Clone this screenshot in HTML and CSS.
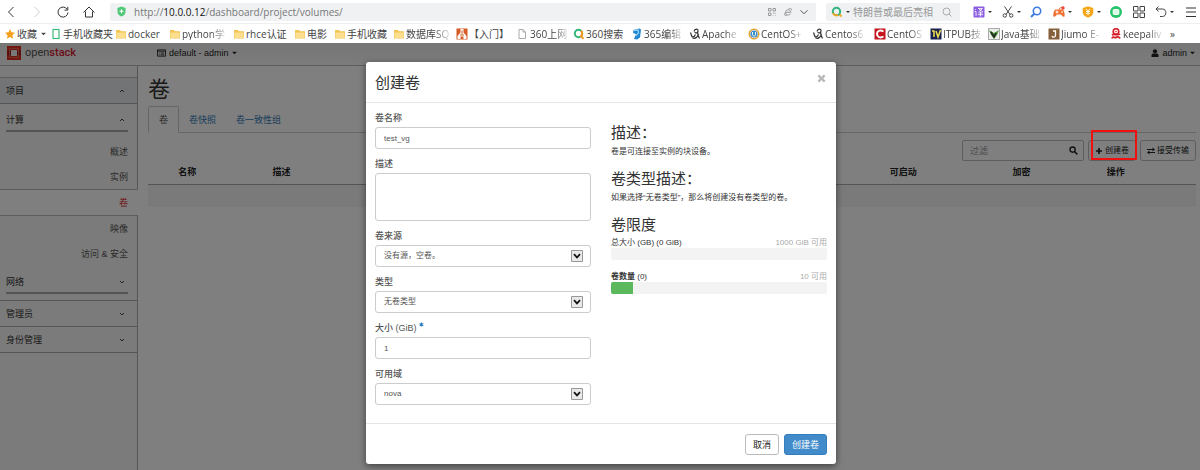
FILE: index.html
```
<!DOCTYPE html>
<html lang="zh-CN">
<head>
<meta charset="utf-8">
<title>卷 - OpenStack Dashboard</title>
<link rel="stylesheet" href="styles.css">
</head>
<body>
<svg class="defs" aria-hidden="true">
  <symbol id="folder" viewBox="0 0 12 12"><path d="M1 2h4l1 1.300h5v7.200H1z" fill="#f4c454"/><path d="M1.500 4.500h9v5.500h-9z" fill="#fcdf8e"/></symbol>
  <symbol id="up" viewBox="0 0 8 8"><path d="M2 5l2-2 2 2" fill="none" stroke="#444" stroke-width="1"/></symbol>
  <symbol id="down" viewBox="0 0 8 8"><path d="M2 3l2 2 2-2" fill="none" stroke="#444" stroke-width="1"/></symbol>
  <symbol id="caret" viewBox="0 0 6 4"><path d="M0 .5h6L3 3.500z" fill="currentColor"/></symbol>
  <symbol id="feather" viewBox="0 0 12 12"><path d="M1.500 4.500l1 3c.5 2 2.500 2 4-1M5 3.500c1-3 4-3 4-1 0 3-3 3-3 1.500M9 3c-1 3 0 5 1.500 7.500M3.500 10c3 1 5-1 6-4" fill="none" stroke="#333" stroke-width="1.200"/></symbol>
  <symbol id="select-arrow" viewBox="0 0 12 12"><path d="M.5.5h11v11H.5z" fill="#e9e9e9" stroke="#999"/><path d="M3 4.200l3 3.200 3-3.200" fill="none" stroke="#111" stroke-width="1.700"/></symbol>
</svg>

<header class="browser">
  <div class="toolbar">
    <nav class="nav-buttons">
      <button aria-label="后退"><svg viewBox="0 0 12 12"><path d="M8.500 1L3.500 6l5 5" fill="none" stroke="#333"/></svg></button>
      <button aria-label="前进"><svg viewBox="0 0 12 12"><path d="M3.500 1l5 5-5 5" fill="none" stroke="#ccc"/></svg></button>
      <button aria-label="刷新"><svg viewBox="0 0 12 12"><path d="M10.300 3.500A5 5 0 1 0 11 6.500" fill="none" stroke="#333"/><path d="M10.800.8v3.300H7.500" fill="none" stroke="#333"/></svg></button>
      <button aria-label="主页"><svg viewBox="0 0 12 12"><path d="M.5 6.500L6 1l5.500 5.500M2.500 5.500V11h7V5.500" fill="none" stroke="#333"/></svg></button>
    </nav>
    <div class="address">
      <svg class="shield" viewBox="0 0 10 12"><path d="M5 .5l4.500 1.500v4C9.500 9 7.500 10.500 5 11.500 2.500 10.500.5 9 .5 6V2z" fill="#4fc978"/><path d="M5 3.500v4.500M2.800 5.700h4.400" stroke="#fff" stroke-width="1.300"/></svg>
      <span class="url">http://<b>10.0.0.12</b>/dashboard/project/volumes/</span>
      <svg class="small" viewBox="0 0 8 8"><path d="M.5.500h2.500v2.500H.5zM5 .5h2.500v2.500H5zM.5 5h2.500v2.500H.5zM5 5h1M7 5v1M5 7.500V7M7 7.500h.5" fill="none" stroke="#999"/></svg>
      <svg class="small" viewBox="0 0 8 8"><path d="M2 4.300h4.800C6.800 1 1.500 1 1.500 4.300c0 3 3.500 3.500 5 1.500M4.500 1.200C6 0 8 0 7.300 2.200M1.300 4.500C0 7 .8 8 3 7" fill="none" stroke="#999"/></svg>
      <svg class="small dark" viewBox="0 0 8 8"><path d="M.5 2.300L4 5.800l3.500-3.500" fill="none" stroke="#555"/></svg>
    </div>
    <div class="search">
      <svg class="icon" viewBox="0 0 12 12"><circle cx="5.500" cy="5.500" r="3.700" fill="none" stroke="#30b47a" stroke-width="2"/><path d="M2 7a3.700 3.700 0 0 0 5 2" fill="none" stroke="#f5a623" stroke-width="2"/><path d="M8.500 8.500l2 2" stroke="#f5a623" stroke-width="2"/></svg>
      <svg class="caret" viewBox="0 0 6 4"><use href="#caret"/></svg>
      <input type="text" aria-label="搜索" placeholder="特朗普或最后亮相">
      <svg class="mag" viewBox="0 0 10 10"><circle cx="4.500" cy="4.500" r="3.500" fill="none" stroke="#aaa"/><path d="M7 7l2.500 2.500" stroke="#aaa"/></svg>
    </div>
    <div class="tools">
      <button aria-label="翻译"><svg class="tool" viewBox="0 0 12 12"><rect x=".5" y=".5" width="11" height="11" rx="1" fill="#8a5fe0"/><path d="M2 3l1 1M1.500 5.500H3v4l1-1M5 2.500h4.500L5.500 6M6 3l4 3M7.500 5.500v5M5.500 7h4M5 8.700h5" stroke="#fff" stroke-width=".8" fill="none"/></svg></button>
      <button aria-label="截图"><svg class="tool" viewBox="0 0 12 12"><path d="M2.500.5l5.500 8M9.500.5L4 8.500" fill="none" stroke="#444"/><circle cx="2.800" cy="9.500" r="1.700" fill="none" stroke="#444"/><circle cx="9.200" cy="9.500" r="1.700" fill="none" stroke="#444"/></svg></button>
      <button aria-label="查找"><svg class="tool" viewBox="0 0 12 12"><circle cx="7" cy="5" r="3.700" fill="none" stroke="#3e7be0" stroke-width="1.600"/><path d="M4.500 7.500L1 11" stroke="#3e7be0" stroke-width="2"/></svg></button>
      <button aria-label="游戏"><svg class="tool" viewBox="0 0 12 12"><path d="M2.500 3.500h7c2 1 2.500 5 2 7-1.500 1-2.500-1-3.500-2H4c-1 1-2 3-3.500 2-.5-2 0-6 2-7z" fill="#f07030"/><path d="M6 3.500C6 1 9 2.500 9.500.500" stroke="#f07030" fill="none"/><path d="M2.500 6h3M4 4.500v3M8 6h2" stroke="#fff"/><circle cx="10" cy="2" r="1.700" fill="#e8483c"/></svg></button>
      <button aria-label="钱包"><svg class="tool" viewBox="0 0 12 12"><path d="M6 .3l5.300 1.700v4.500C11 9 9 10.700 6 11.800 3 10.700 1 9 .7 6.500V2z" fill="#f5a81c"/><path d="M4 3l2 2 2-2M6 5v4M4 5.500h4M4 7.300h4" stroke="#fff" stroke-width=".9" fill="none"/></svg></button>
      <button aria-label="手机"><svg class="tool" viewBox="0 0 12 12"><circle cx="6" cy="6" r="6" fill="#27c46b"/><rect x="3.200" y="3.500" width="5.600" height="5" rx="1" fill="#d9f7e6" stroke="#fff"/></svg></button>
      <button aria-label="应用"><svg class="tool" viewBox="0 0 12 12"><path d="M.5.500h4.500v4.500H.5zM7 .5h4.500v4.500H7zM.5 7h4.500v4.500H.5zM7 7h4.500v4.500H7z" fill="none" stroke="#444"/></svg></button>
      <button aria-label="恢复"><svg class="tool" viewBox="0 0 12 12"><path d="M3.500.5L1 3l2.500 2.500M1 3h6.500c4.500 0 4.500 7.500 0 7.500H5" fill="none" stroke="#444"/></svg></button>
      <button aria-label="菜单"><svg class="tool" viewBox="0 0 12 12"><path d="M1 2h10M1 6h10M1 10.500h10" stroke="#333"/></svg></button>
    </div>
  </div>
  <nav class="bookmarks">
    <a href="#"><svg viewBox="0 0 12 12"><path d="M6 1l1.500 3.300 3.500.4-2.600 2.500.7 3.600L6 9l-3.100 1.800.7-3.600L1 4.700l3.500-.4z" fill="#f5a01c"/></svg><span>收藏</span><svg class="caret" viewBox="0 0 6 4"><use href="#caret"/></svg></a>
    <a href="#"><svg viewBox="0 0 12 12"><rect x="3" y="1.500" width="6" height="9" fill="none" stroke="#3dba78" stroke-width="1.200"/></svg><span>手机收藏夹</span></a>
    <a href="#"><svg><use href="#folder"/></svg><span>docker</span></a>
    <a href="#" class="fade"><svg><use href="#folder"/></svg><span>python学</span></a>
    <a href="#"><svg><use href="#folder"/></svg><span>rhce认证</span></a>
    <a href="#"><svg><use href="#folder"/></svg><span>电影</span></a>
    <a href="#"><svg><use href="#folder"/></svg><span>手机收藏</span></a>
    <a href="#" class="fade"><svg><use href="#folder"/></svg><span>数据库SQ</span></a>
    <a href="#"><svg viewBox="0 0 12 12"><rect x=".5" y=".5" width="11" height="11" fill="#d65a24"/><path d="M4.500 1h3v3.500L10.500 8v3h-3V8.500h-3V11h-3V8l3-3.500z" fill="#fff"/><path d="M6 2.500v3.500M4 7h4" stroke="#d65a24"/></svg><span>【入门】</span></a>
    <a href="#" class="fade"><svg viewBox="0 0 12 12"><path d="M2 1.500h4l2.500 2.500v6.500H2zM6 1.500V4h2.500" fill="none" stroke="#aaa"/></svg><span>360上网</span></a>
    <a href="#"><svg viewBox="0 0 12 12"><circle cx="5.500" cy="5.500" r="3.700" fill="none" stroke="#30b47a" stroke-width="2"/><path d="M8 2.700a3.700 3.700 0 0 1 0 5.500l2.500 2.500" fill="none" stroke="#f59a23" stroke-width="2"/></svg><span>360搜索</span></a>
    <a href="#" class="fade"><svg viewBox="0 0 12 12"><path d="M2.500 2l6-1.500 1.500 1-1 8-3 2-3-.5 2-5-3-1z" fill="#1f86cf"/><path d="M3 2.500l4-.5.5 2.500L5 8" fill="none" stroke="#9fd8f8" stroke-width="1.200"/></svg><span>365编辑</span></a>
    <a href="#" class="fade"><svg><use href="#feather"/></svg><span>Apache</span></a>
    <a href="#" class="fade"><svg viewBox="0 0 12 12"><circle cx="6" cy="6" r="4.700" fill="#fff" stroke="#e0a53b" stroke-width="1.600"/><circle cx="6" cy="6" r="3.600" fill="#3a8fc6"/><path d="M4.500 4v2.500c0 2 3 2 3 0V4" fill="none" stroke="#fff"/></svg><span>CentOS+</span></a>
    <a href="#" class="fade"><svg><use href="#feather"/></svg><span>Centos6</span></a>
    <a href="#" class="fade"><svg viewBox="0 0 12 12"><rect x=".5" y=".5" width="11" height="11" fill="#c4161c"/><path d="M9.500 3.500C6 1.500 3 3 3 6s3 4.500 6.500 2.500" fill="none" stroke="#fff" stroke-width="2"/></svg><span>CentOS</span></a>
    <a href="#" class="fade"><svg viewBox="0 0 12 12"><rect x=".5" y=".5" width="11" height="11" fill="#182050"/><path d="M2 3h2v6M6 3l2 6 2.500-7" fill="none" stroke="#f2e14a" stroke-width="1.500"/></svg><span>ITPUB技</span></a>
    <a href="#" class="fade"><svg viewBox="0 0 12 12"><rect x=".5" y=".5" width="11" height="11" fill="#eee" stroke="#aaa"/><path d="M1 2l5 3 5-3-2 5-3 4-3-4z" fill="#4a9636"/><path d="M3 4l3 5 2-4" fill="none" stroke="#222" stroke-width="1.500"/></svg><span>Java基础</span></a>
    <a href="#" class="fade"><svg viewBox="0 0 12 12"><rect x=".5" y=".5" width="11" height="11" fill="#86603a"/><path d="M5 3h2.500v4.500c0 2-3 2-3.500.5" fill="none" stroke="#fff" stroke-width="1.300"/></svg><span>Jiumo E-</span></a>
    <a href="#" class="fade"><svg viewBox="0 0 12 12"><circle cx="6" cy="3.500" r="2.800" fill="none" stroke="#d5202a" stroke-width="1.700"/><path d="M2 7c3-2 5 1 8-1M2 10.500c1-3 3 0 4-1s3-1 4 1" fill="none" stroke="#d5202a" stroke-width="1.800"/><circle cx="6" cy="3.500" r=".8" fill="#d5202a"/></svg><span>keepaliv</span></a>
    <button class="more" aria-label="更多书签">»</button>
  </nav>
</header>

<div class="viewport">
  <div class="page">
    <header class="topbar">
      <a href="#" class="brand"><svg viewBox="0 0 16 16"><path d="M1 1h14v14H1zM5 5v6h6V5z" fill="#e0301e" fill-rule="evenodd"/><path d="M1 5.500h4v5H1zM11 5.500h4v5h-4z" fill="#a8201a"/><path d="M3.500 3.500h9v9h-9z" fill="none" stroke="#f08a80" stroke-width=".6"/></svg><span>open<b>stack</b></span></a>
      <button class="context"><svg viewBox="0 0 10 8"><path d="M.5.500h9v7h-9zM.5 2h9M2 4h1M4 4h4M2 6h1M4 6h4" fill="none" stroke="#222"/></svg>default - admin<svg class="caret" viewBox="0 0 6 4"><use href="#caret"/></svg></button>
      <button class="user"><svg viewBox="0 0 8 8"><circle cx="4" cy="2.300" r="2.100" fill="#222"/><path d="M.5 8V6c0-1 1-1.600 2-1.600h3c1 0 2 .6 2 1.600v2z" fill="#222"/></svg>admin<svg class="caret" viewBox="0 0 6 4"><use href="#caret"/></svg></button>
    </header>
    <div class="columns">
      <nav class="sidebar">
        <button class="panel open">项目<svg><use href="#up"/></svg></button>
        <button class="group">计算<svg><use href="#up"/></svg></button>
        <a href="#">概述</a>
        <a href="#">实例</a>
        <a href="#" class="active">卷</a>
        <a href="#">映像</a>
        <a href="#">访问 &amp; 安全</a>
        <button class="group last">网络<svg><use href="#down"/></svg></button>
        <button class="panel">管理员<svg><use href="#down"/></svg></button>
        <button class="panel">身份管理<svg><use href="#down"/></svg></button>
      </nav>
      <main class="content">
        <h1>卷</h1>
        <nav class="tabs"><a href="#" class="current">卷</a><a href="#">卷快照</a><a href="#">卷一致性组</a></nav>
        <div class="actions">
          <div class="filter"><input type="text" aria-label="过滤" placeholder="过滤"><svg viewBox="0 0 10 10"><circle cx="4" cy="4" r="2.900" fill="none" stroke="#222" stroke-width="1.500"/><path d="M6.300 6.300l3 3" stroke="#222" stroke-width="1.700"/></svg></div>
          <div class="marked"><button class="btn"><svg viewBox="0 0 8 8"><path d="M4 1v6M1 4h6" stroke="#222" stroke-width="1.700"/></svg>创建卷</button></div>
          <button class="btn"><svg viewBox="0 0 8 8"><path d="M0 2.500h6M2 5.500h6" stroke="#222" stroke-width="1.200"/><path d="M5.500.5L8 2.500 5.500 4.500zM2.500 3.500L0 5.500l2.500 2z" fill="#222"/></svg>接受传输</button>
        </div>
        <table>
          <colgroup><col class="c-check"><col class="c-name"><col class="c-name"><col><col><col><col><col><col class="c-boot"><col class="c-name"><col class="c-name"></colgroup>
          <thead><tr><th></th><th>名称</th><th>描述</th><th>大小</th><th colspan="4"></th><th>可启动</th><th>加密</th><th>操作</th></tr></thead>
          <tbody><tr><td colspan="11"></td></tr></tbody>
        </table>
      </main>
    </div>
  </div>

  <div class="backdrop">
    <form class="modal" role="dialog" aria-labelledby="dialog-title">
      <header><h2 id="dialog-title">创建卷</h2><button type="button" class="close" aria-label="关闭"><svg viewBox="0 0 10 10"><path d="M1.500 1.500l7 7M8.500 1.500l-7 7" stroke="#b8b8b8" stroke-width="2.500"/></svg></button></header>
      <div class="modal-body">
        <div class="fields">
          <div class="field"><label for="name">卷名称</label><input id="name" type="text" value="test_vg"></div>
          <div class="field"><label for="desc">描述</label><textarea id="desc"></textarea></div>
          <div class="field"><label for="source">卷来源</label><div class="select"><select id="source"><option>没有源，空卷。</option></select><svg><use href="#select-arrow"/></svg></div></div>
          <div class="field"><label for="type">类型</label><div class="select"><select id="type"><option>无卷类型</option></select><svg><use href="#select-arrow"/></svg></div></div>
          <div class="field"><label for="size">大小 (GiB) <svg class="required" viewBox="0 0 6 6"><path d="M3 .5v5M.8 1.700l4.400 2.600M5.200 1.700L.8 4.300" stroke="#2f7cc4" stroke-width="1.300"/></svg></label><input id="size" type="text" value="1"></div>
          <div class="field"><label for="zone">可用域</label><div class="select"><select id="zone"><option>nova</option></select><svg><use href="#select-arrow"/></svg></div></div>
        </div>
        <div class="help">
          <h3>描述：</h3>
          <p>卷是可连接至实例的块设备。</p>
          <h3>卷类型描述：</h3>
          <p>如果选择“无卷类型”，那么将创建没有卷类型的卷。</p>
          <h3>卷限度</h3>
          <div class="quota"><span>总大小 (GB) (0 GiB)</span><span class="left">1000 GiB 可用</span></div>
          <div class="bar"></div>
          <div class="quota"><span><b>卷数量</b> (0)</span><span class="left">10 可用</span></div>
          <div class="bar"><div class="fill" style="width:10%"></div></div>
        </div>
      </div>
      <footer><button type="button" class="btn">取消</button><button type="button" class="btn primary">创建卷</button></footer>
    </form>
  </div>
</div>
</body>
</html>
```
FILE: styles.css
```
* { box-sizing: border-box; }
html, body { height: 100%; margin: 0; }
body {
  display: flex;
  flex-direction: column;
  overflow: hidden;
  font: 9px/12px "Liberation Sans", "Noto Sans CJK SC", sans-serif;
  color: #333;
}
button, input, select, textarea { font: inherit; color: inherit; }
button { display: flex; align-items: center; padding: 0; border: 0; background: none; white-space: nowrap; }
a { color: inherit; text-decoration: none; }
svg { flex: none; display: block; }
.defs { position: absolute; width: 0; height: 0; }
.caret { width: 5px; height: 4px; }

/* Browser chrome */
.browser { flex: none; background: #fff; font-family: "Open Sans", "Noto Sans CJK SC", sans-serif; font-size: 10px; }
.toolbar { display: flex; align-items: center; height: 24px; border-bottom: 1px solid #eee; }
.nav-buttons { display: flex; gap: 14px; padding: 0 15px 0 5px; }
.nav-buttons svg { width: 12px; height: 12px; }
.address { flex: 1; display: flex; align-items: center; gap: 8px; height: 18px; padding: 0 8px 0 7px; background: #eff1f3; border-radius: 2px; }
.shield { width: 9px; height: 11px; }
.url { flex: 1; color: #777; }
.url b { font-weight: 400; color: #111; }
.small { width: 8px; height: 8px; }
.search { display: flex; align-items: center; gap: 3px; width: 134px; height: 18px; margin: 0 10px; padding: 0 8px 0 5px; background: #eff1f3; border-radius: 2px; }
.search .icon { width: 12px; height: 12px; }
.search .caret { width: 4px; }
.search input { flex: 1; min-width: 0; padding: 0; border: 0; background: none; }
.search input::placeholder { color: #999; }
.mag { width: 10px; height: 10px; }
.tools { display: grid; grid-template-columns: 29px 28px 23px 29px 28px 23px 22px 30px 14px; width: 230px; padding-left: 3px; }
.tools .tool { width: 12px; height: 12px; }
.tools button:nth-child(1)::after,
.tools button:nth-child(2)::after,
.tools button:nth-child(4)::after,
.tools button:nth-child(5)::after,
.tools button:nth-child(8)::after { content: ""; margin-left: 3px; border: 2px solid transparent; border-top-color: #333; border-bottom: 0; }
.bookmarks {
  display: grid;
  grid-template-columns: 46px 65px 54px 64px 61px 40px 59px 63px 61px 56px 58px 58px 59px 64px 62px 56px 58px 60px 62px 60px auto;
  align-items: center;
  height: 19px;
  padding-left: 4px;
  color: #444;
}
.bookmarks a { display: flex; align-items: center; gap: 1px; white-space: nowrap; }
.bookmarks svg { width: 12px; height: 12px; }
.bookmarks .caret { width: 5px; height: 4px; margin-left: 3px; }
.fade span { -webkit-mask-image: linear-gradient(90deg, #000 65%, rgba(0, 0, 0, .2)); mask-image: linear-gradient(90deg, #000 65%, rgba(0, 0, 0, .2)); }

/* Dashboard */
.viewport { flex: 1; position: relative; overflow: hidden; }
.page { display: flex; flex-direction: column; height: 100%; background: #fff; }
.page::after { content: ""; position: absolute; inset: 0; background: rgba(0, 0, 0, .5); }
.topbar { display: flex; align-items: center; height: 23px; padding: 0 5px 2px 6px; background: linear-gradient(#ececec, #f8f8f8); border-bottom: 1px solid #bbb; color: #222; }
.brand { display: flex; align-items: center; gap: 3px; width: 151px; font: 11px/16px Roboto, sans-serif; color: #555; }
.brand svg { width: 16px; height: 16px; }
.brand b { font-weight: 500; color: #da1a32; }
.context, .user { gap: 3px; }
.context svg { width: 9px; height: 8px; }
.user { margin-left: auto; }
.user svg { width: 8px; height: 8px; }
.topbar .caret { width: 5px; height: 4px; }
.columns { flex: 1; display: flex; }
.sidebar { width: 138px; flex: none; padding-top: 11px; background: #f7f7f7; border-right: 1px solid #aaa; }
.sidebar svg { width: 8px; height: 8px; margin-left: auto; }
.sidebar a { display: flex; align-items: center; justify-content: flex-end; height: 25px; padding-right: 9px; color: #555; }
.sidebar .active { height: 27px; margin-right: -1px; padding-right: 10px; background: #fff; border: solid #bbb; border-width: 1px 0; color: #d22; }
.panel { width: 100%; height: 26px; padding: 0 11px 0 6px; border-bottom: 1px solid #aaa; }
.open { height: 27px; background: #e6e9ec; border-top: 1px solid #bbb; }
.group { width: 122px; height: 24px; margin: 4px 0 7px 6px; padding: 2px 2px 0 0; border-bottom: 2px solid #aaa; }
.last { margin-bottom: 6px; }
.group.last + .panel { height: 27px; border-top: 1px solid #aaa; }
.content { flex: 1; min-width: 0; padding: 12px 4px 0 10px; }
h1 { margin: 0; font-size: 22px; line-height: 24px; font-weight: 400; }
.tabs { display: flex; height: 31px; padding-top: 4px; border-bottom: 1px solid #ccc; color: #337ab7; }
.tabs a { padding: 8px 10px; }
.tabs .current { height: 27px; padding: 7px 10px; border: 1px solid #ccc; border-bottom-color: #fff; border-radius: 2px 2px 0 0; background: #fff; color: #555; }
.actions { display: flex; justify-content: flex-end; gap: 4px; padding-top: 7px; }
.actions .btn { padding: 0 6px; font-size: 8px; }
.filter { display: flex; align-items: center; width: 122px; height: 21px; padding: 0 5px 0 7px; border: 1px solid #bbb; border-radius: 2px; }
.filter input { flex: 1; min-width: 0; padding: 0; border: 0; background: none; }
.filter input::placeholder { color: #999; }
.filter svg { width: 9px; height: 9px; }
.btn { justify-content: center; gap: 2px; height: 21px; padding: 0 7px; border: 1px solid #bbb; border-radius: 3px; background: #fff; color: #222; }
.btn svg { width: 8px; height: 8px; }
.marked { position: relative; }
.marked::after { content: ""; position: absolute; z-index: 2; inset: -10px -1px 1px 3px; border: 2px solid #f01010; }
table { width: 100%; table-layout: fixed; border-collapse: collapse; }
th { height: 23px; padding: 0 5px; border-bottom: 1px solid #aaa; text-align: left; font-weight: 700; color: #222; }
td { height: 23px; padding: 0; background: #f4f4f4; }
.c-check { width: 2.4%; }
.c-name { width: 9%; }
.c-boot { width: 11.7%; }

/* Dialog */
.backdrop { position: absolute; z-index: 1; inset: 0; display: flex; align-items: flex-start; justify-content: center; padding: 19px 0 0 2px; }
.modal { width: 470px; background: #fff; border-radius: 3px; box-shadow: 0 2px 7px rgba(0, 0, 0, .5); }
.modal header { display: flex; align-items: flex-start; justify-content: space-between; padding: 12px 10px 10px 9px; border-bottom: 1px solid #e5e5e5; }
h2, h3 { margin: 0; font-size: 15px; line-height: 18px; font-weight: 400; }
.close svg { width: 9px; height: 9px; }
.modal-body { display: grid; grid-template-columns: 1fr 1fr; gap: 20px; padding: 9px; }
.field { margin-bottom: 9px; }
.field label { display: block; margin-bottom: 3px; color: #555; font-weight: 500; }
.field input, .field select, .field textarea { display: block; width: 100%; height: 22px; padding: 0 8px; border: 1px solid #ccc; border-radius: 3px; background: #fff; color: #555; font-size: 8px; }
.field textarea { height: 48px; resize: none; }
.select { position: relative; }
.field select { appearance: none; }
.select svg { position: absolute; top: 5px; right: 8px; width: 12px; height: 12px; pointer-events: none; }
.required { display: inline-block; width: 5px; height: 5px; vertical-align: 4px; }
.help { font-size: 8px; }
.help h3 { margin: 12px 0 4px; }
.help p { margin: 0; }
.quota { display: flex; justify-content: space-between; line-height: 10px; }
.left { color: #aaa; }
.bar { height: 12px; margin-bottom: 12px; border-radius: 2px; background: #f3f3f3; overflow: hidden; }
.fill { height: 100%; background: #5cb85c; }
.modal footer { display: flex; justify-content: flex-end; gap: 5px; padding: 10px 9px 9px; border-top: 1px solid #e5e5e5; }
.primary { background: #428bca; border-color: #357ebd; color: #fff; }
```
